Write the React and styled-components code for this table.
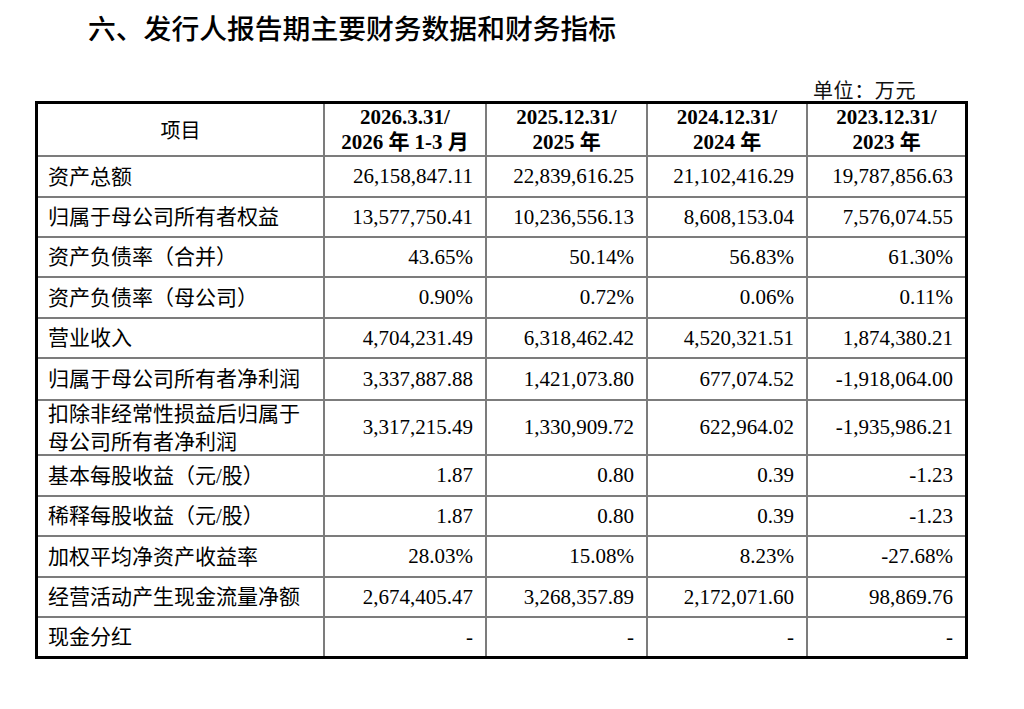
import React from "react";
import styled, { createGlobalStyle } from "styled-components";

const Global = createGlobalStyle`
  html, body { margin: 0; padding: 0; background: #fff; }
  body { font-family: "Liberation Serif", "Noto Sans CJK SC", serif; color: #000; }
`;

const Page = styled.div`
  width: 1024px;
  height: 709px;
  padding: 12px 0 0 35px;
  box-sizing: border-box;
`;

const Title = styled.h1`
  margin: 0 0 0 53px;
  font-family: "Noto Sans CJK SC", sans-serif;
  font-size: 27.8px;
  line-height: 30px;
  font-weight: 500;
  color: #000;
`;

const Unit = styled.div`
  width: 933px;
  box-sizing: border-box;
  margin-top: 37px;
  padding-right: 52px;
  text-align: right;
  font-family: "Noto Sans CJK SC", sans-serif;
  font-size: 20px;
  letter-spacing: 0.6px;
  line-height: 22px;
  color: #111;
`;

const Grid = styled.div`
  display: grid;
  width: 933px;
  box-sizing: border-box;
  grid-template-columns: 285px 160px 159px 158px 157px;
  grid-template-rows: ${(p) => p.$rows};
  gap: 2px;
  background: #7c7c7c;
  border: 3px solid #000;
`;

const Cell = styled.div`
  background: #fff;
  display: flex;
  align-items: center;
  overflow: hidden;
  white-space: nowrap;
`;

const HeadCell = styled(Cell)`
  justify-content: center;
  text-align: center;
  flex-direction: column;
  font-family: "Liberation Serif", "Noto Sans CJK SC", serif;
  font-weight: ${(p) => (p.$bold ? 700 : 400)};
  font-size: 21px;
  line-height: 25px;
`;

const HeadLabel = styled.span`
  font-family: "Noto Sans CJK SC", sans-serif;
  font-weight: 400;
  font-size: 20px;
`;

const LabelCell = styled(Cell)`
  padding-left: 10px;
  font-family: "Liberation Serif", "Noto Sans CJK SC", serif;
  font-size: 21px;
  line-height: 28px;
  white-space: normal;
`;

const NumCell = styled(Cell)`
  justify-content: flex-end;
  padding-right: 12px;
  font-family: "Liberation Serif", serif;
  font-size: 21px;
`;

const headers = [
  ["2026.3.31/", "2026 年 1-3 月"],
  ["2025.12.31/", "2025 年"],
  ["2024.12.31/", "2024 年"],
  ["2023.12.31/", "2023 年"],
];

const rows = [
  { h: 39, label: ["资产总额"], v: ["26,158,847.11", "22,839,616.25", "21,102,416.29", "19,787,856.63"] },
  { h: 38, label: ["归属于母公司所有者权益"], v: ["13,577,750.41", "10,236,556.13", "8,608,153.04", "7,576,074.55"] },
  { h: 38, label: ["资产负债率（合并）"], v: ["43.65%", "50.14%", "56.83%", "61.30%"] },
  { h: 39, label: ["资产负债率（母公司）"], v: ["0.90%", "0.72%", "0.06%", "0.11%"] },
  { h: 38, label: ["营业收入"], v: ["4,704,231.49", "6,318,462.42", "4,520,321.51", "1,874,380.21"] },
  { h: 40, label: ["归属于母公司所有者净利润"], v: ["3,337,887.88", "1,421,073.80", "677,074.52", "-1,918,064.00"] },
  { h: 53, label: ["扣除非经常性损益后归属于", "母公司所有者净利润"], v: ["3,317,215.49", "1,330,909.72", "622,964.02", "-1,935,986.21"] },
  { h: 39, label: ["基本每股收益（元/股）"], v: ["1.87", "0.80", "0.39", "-1.23"] },
  { h: 38, label: ["稀释每股收益（元/股）"], v: ["1.87", "0.80", "0.39", "-1.23"] },
  { h: 39, label: ["加权平均净资产收益率"], v: ["28.03%", "15.08%", "8.23%", "-27.68%"] },
  { h: 38, label: ["经营活动产生现金流量净额"], v: ["2,674,405.47", "3,268,357.89", "2,172,071.60", "98,869.76"] },
  { h: 38, label: ["现金分红"], v: ["-", "-", "-", "-"] },
];

export default function App() {
  const template = ["51px", ...rows.map((r) => `${r.h}px`)].join(" ");
  return (
    <Page>
      <Global />
      <Title>六、发行人报告期主要财务数据和财务指标</Title>
      <Unit>单位：万元</Unit>
      <Grid $rows={template}>
        <HeadCell>
          <HeadLabel>项目</HeadLabel>
        </HeadCell>
        {headers.map((h, i) => (
          <HeadCell key={i} $bold>
            <span>{h[0]}</span>
            <span>{h[1]}</span>
          </HeadCell>
        ))}
        {rows.map((r, i) => (
          <React.Fragment key={i}>
            <LabelCell>
              <div>
                {r.label.map((l, j) => (
                  <div key={j}>{l}</div>
                ))}
              </div>
            </LabelCell>
            {r.v.map((v, j) => (
              <NumCell key={j}>{v}</NumCell>
            ))}
          </React.Fragment>
        ))}
      </Grid>
    </Page>
  );
}
